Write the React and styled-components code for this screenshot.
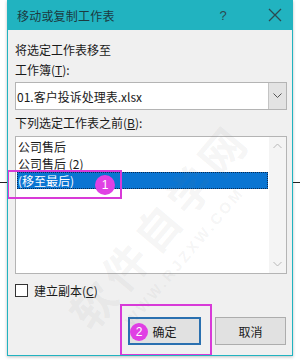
import styled, { createGlobalStyle } from "styled-components"

const GlobalStyle = createGlobalStyle`
    html, body {
        margin: 0;
        padding: 0;
        background: #ffffff;
    }
    body {
        font-family: "Noto Sans CJK SC", "Liberation Sans", sans-serif;
        font-size: 12px;
        color: #1a1a1a;
    }
`

const App = () => {
  return (
    <Page>
        <GlobalStyle />
        <Dialog>
            <TitleBar>
                <Title>移动或复制工作表</Title>
                <TitleButton>?</TitleButton>
                <TitleButton $close>
                    <svg width="14" height="14" viewBox="0 0 14 14">
                        <path d="M1 1 L13 13 M13 1 L1 13" stroke="#2b4a50" strokeWidth="1.3" fill="none" />
                    </svg>
                </TitleButton>
            </TitleBar>
            <Body>
                <Label>将选定工作表移至</Label>
                <Label>工作簿(<u>T</u>):</Label>
                <Combo>
                    <ComboText>01.客户投诉处理表.xlsx</ComboText>
                    <ComboArrow>
                        <svg width="9" height="6" viewBox="0 0 9 6">
                            <path d="M0.5 0.5 L4.5 4.5 L8.5 0.5" stroke="#555" strokeWidth="1" fill="none" />
                        </svg>
                    </ComboArrow>
                </Combo>
                <Label $top={4}>下列选定工作表之前(<u>B</u>):</Label>
                <ListBox>
                    <Items>
                        <Item>公司售后</Item>
                        <Item>公司售后 (2)</Item>
                        <Item $selected>(移至最后)</Item>
                    </Items>
                    <ScrollBar>
                        <svg width="9" height="6" viewBox="0 0 9 6">
                            <path d="M0.5 5 L4.5 1 L8.5 5" stroke="#b8b8b8" strokeWidth="1" fill="none" />
                        </svg>
                        <svg width="9" height="6" viewBox="0 0 9 6">
                            <path d="M0.5 1 L4.5 5 L8.5 1" stroke="#b8b8b8" strokeWidth="1" fill="none" />
                        </svg>
                    </ScrollBar>
                    <MarkBox $left={-9} $top={33} $width={115} $height={29}>
                        <Badge $right={5}>1</Badge>
                    </MarkBox>
                </ListBox>
                <CheckRow>
                    <CheckBox />
                    <span>建立副本(<u>C</u>)</span>
                </CheckRow>
                <ButtonRow>
                    <ButtonSlot>
                        <DialogButton $primary>确定</DialogButton>
                        <MarkBox $left={-8} $top={-13} $width={92} $height={52}>
                            <Badge $left={8} $top={17} $small>2</Badge>
                        </MarkBox>
                    </ButtonSlot>
                    <DialogButton>取消</DialogButton>
                </ButtonRow>
            </Body>
            <Watermark>
                <WatermarkBig>软件自学网</WatermarkBig>
                <WatermarkSmall>WWW.RJZXW.COM</WatermarkSmall>
            </Watermark>
        </Dialog>
        <GuideLine $side="left" />
        <GuideLine $side="right" />
    </Page>
  )
}

const Page = styled.div`
    position: relative;
    width: 300px;
    height: 362px;
    padding-left: 7px;
    box-sizing: border-box;
    overflow: hidden;
`

const Dialog = styled.div`
    position: relative;
    width: 286px;
    height: 356px;
    box-sizing: border-box;
    background: #f0f0f0;
    border: 1px solid #21b3c0;
    border-top: none;
    box-shadow: 0 1px 3px rgba(0, 0, 0, 0.25);
    overflow: hidden;
`

const TitleBar = styled.div`
    display: flex;
    align-items: center;
    height: 30px;
    background: #21b3c0;
    padding-left: 9px;
    padding-right: 10px;
`

const Title = styled.div`
    flex: 1;
    font-size: 12px;
    color: #1c3a40;
    letter-spacing: 0.2px;
`

const TitleButton = styled.div`
    display: flex;
    align-items: center;
    justify-content: center;
    width: 14px;
    margin-left: ${(props) => (props.$close ? "38px" : "0")};
    font-family: "Liberation Sans", sans-serif;
    font-size: 13px;
    color: #2b4a50;
`

const Body = styled.div`
    display: flex;
    flex-direction: column;
    padding: 11px 5px 0 7px;
`

const Label = styled.div`
    height: 20px;
    line-height: 18px;
    margin-top: ${(props) => (props.$top ? props.$top + "px" : "0")};
    font-size: 12px;
    color: #1a1a1a;
`

const Combo = styled.div`
    display: flex;
    height: 28px;
    margin-top: 1px;
    background: #ffffff;
    border: 1px solid #b4b4b4;
    box-sizing: border-box;
`

const ComboText = styled.div`
    flex: 1;
    display: flex;
    align-items: center;
    padding-left: 1px;
    font-size: 12px;
`

const ComboArrow = styled.div`
    display: flex;
    align-items: center;
    justify-content: center;
    width: 17px;
    background: #e3e3e3;
    border-left: 1px solid #c4c4c4;
`

const ListBox = styled.div`
    position: relative;
    display: flex;
    height: 138px;
    margin-top: 2px;
    background: #ffffff;
    border: 1px solid #b4b4b4;
    box-sizing: border-box;
`

const Items = styled.div`
    flex: 1;
    display: flex;
    flex-direction: column;
    padding: 1px 1px 0 1px;
`

const Item = styled.div`
    height: 17px;
    line-height: 17px;
    padding-left: 1px;
    font-size: 12px;
    color: ${(props) => (props.$selected ? "#ffffff" : "#1a1a1a")};
    background: ${(props) => (props.$selected ? "#0a75d2" : "transparent")};
    outline: ${(props) => (props.$selected ? "1px dotted #0b2a50" : "none")};
    outline-offset: -1px;
`

const ScrollBar = styled.div`
    display: flex;
    flex-direction: column;
    justify-content: space-between;
    align-items: center;
    width: 17px;
    padding: 6px 0 6px;
    box-sizing: border-box;
    background: #f4f4f4;
`

const MarkBox = styled.div`
    position: absolute;
    left: ${(props) => props.$left}px;
    top: ${(props) => props.$top}px;
    width: ${(props) => props.$width}px;
    height: ${(props) => props.$height}px;
    box-sizing: border-box;
    border: 2px solid #d83ad8;
    pointer-events: none;
`

const Badge = styled.div`
    position: absolute;
    top: ${(props) => (props.$top !== undefined ? props.$top + "px" : "3px")};
    ${(props) => (props.$left !== undefined ? `left: ${props.$left}px;` : `right: ${props.$right}px;`)}
    width: ${(props) => (props.$small ? "18px" : "20px")};
    height: ${(props) => (props.$small ? "18px" : "20px")};
    border-radius: 50%;
    background: #e040e4;
    color: #ffffff;
    font-family: "Liberation Sans", sans-serif;
    font-size: 12px;
    display: flex;
    align-items: center;
    justify-content: center;
`

const CheckRow = styled.div`
    display: flex;
    align-items: center;
    gap: 6px;
    height: 20px;
    margin-top: 6px;
    font-size: 12px;
`

const CheckBox = styled.div`
    width: 11px;
    height: 11px;
    background: #ffffff;
    border: 1px solid #333333;
`

const ButtonRow = styled.div`
    display: flex;
    justify-content: flex-end;
    gap: 14px;
    margin-top: 17px;
    padding-right: 1px;
`

const ButtonSlot = styled.div`
    position: relative;
`

const DialogButton = styled.div`
    display: flex;
    align-items: center;
    justify-content: center;
    width: ${(props) => (props.$primary ? "73px" : "71px")};
    height: 28px;
    box-sizing: border-box;
    background: #e1e1e1;
    border: ${(props) => (props.$primary ? "2px solid #2a70b0" : "1px solid #adadad")};
    font-size: 12px;
    color: #1a1a1a;
`

const Watermark = styled.div`
    position: absolute;
    left: 45px;
    top: 300px;
    transform: rotate(-50deg);
    transform-origin: left top;
    pointer-events: none;
    color: rgba(120, 120, 120, 0.08);
`

const WatermarkBig = styled.div`
    font-size: 44px;
    font-weight: 700;
    letter-spacing: 6px;
    white-space: nowrap;
`

const WatermarkSmall = styled.div`
    font-family: "Liberation Sans", sans-serif;
    font-size: 15px;
    font-weight: 700;
    letter-spacing: 3px;
    white-space: nowrap;
    margin-left: 30px;
`

const GuideLine = styled.div`
    position: absolute;
    top: 182px;
    ${(props) => (props.$side === "left" ? "left: 0;" : "right: 0;")}
    width: 7px;
    height: 1px;
    background: #222222;
`

export default App
